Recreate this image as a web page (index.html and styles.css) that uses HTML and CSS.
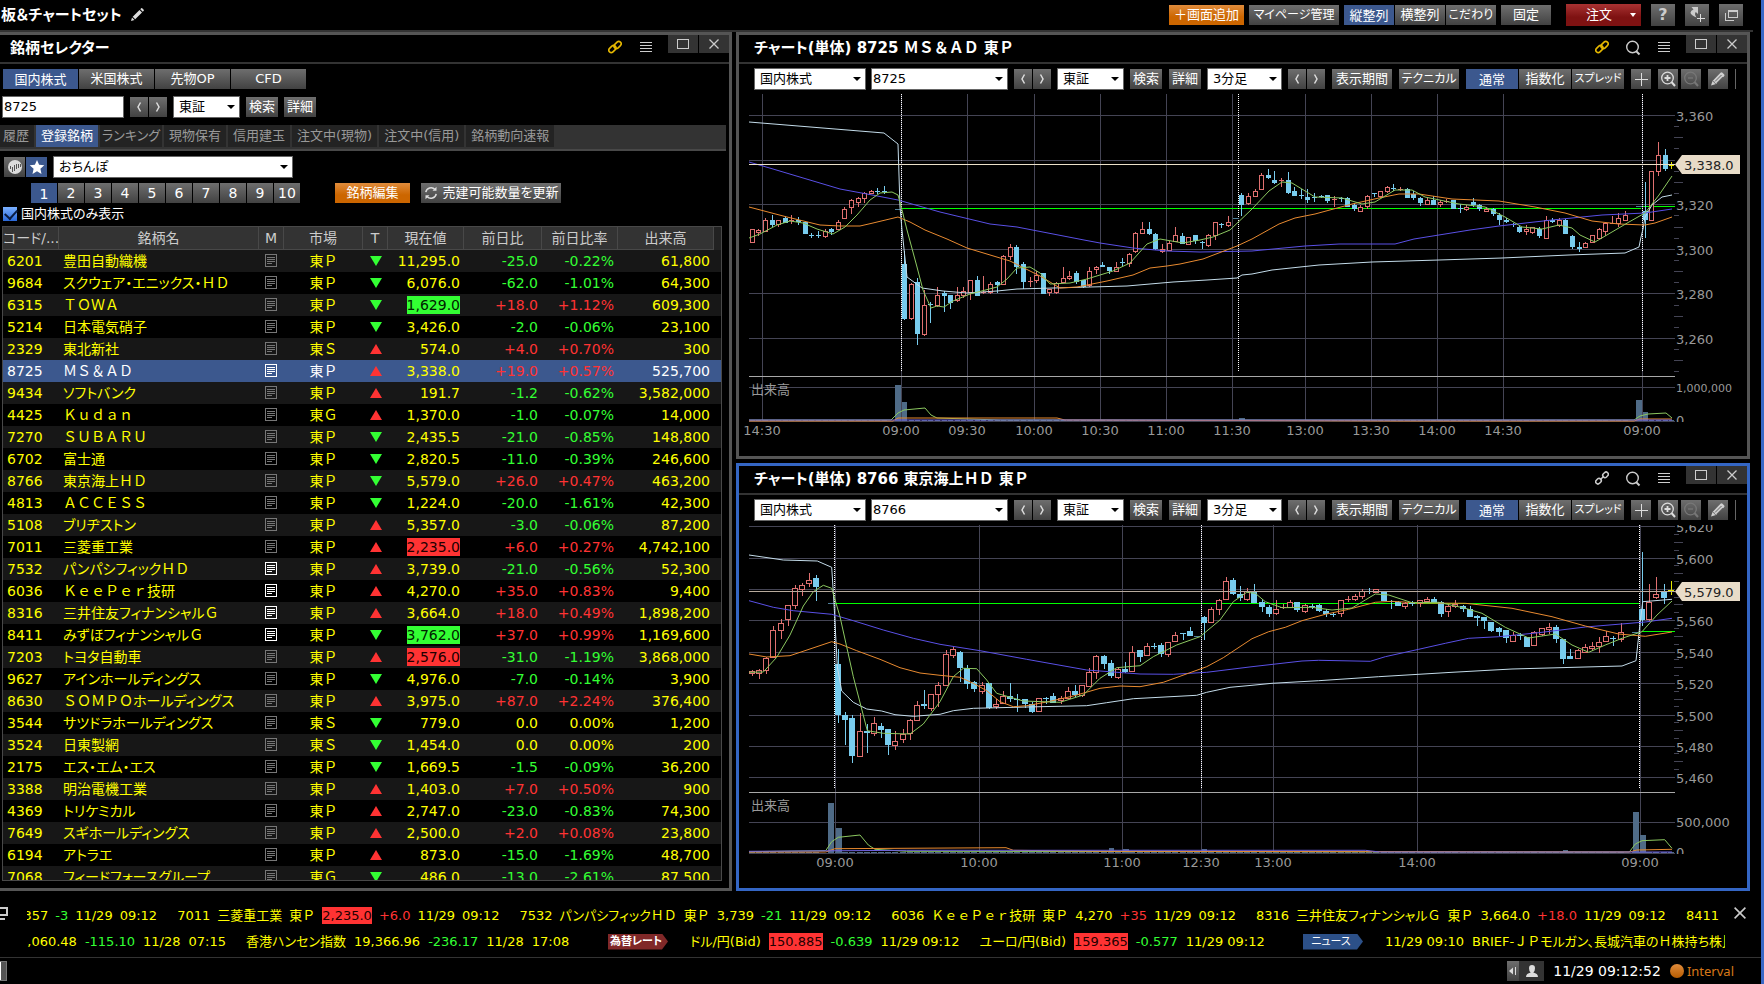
FILE: index.html
```html
<!DOCTYPE html>
<html lang="ja">
<head>
<meta charset="utf-8">
<title>板＆チャートセット</title>
<link rel="stylesheet" href="styles.css">
</head>
<body>
<svg class="defs" aria-hidden="true">
  <symbol id="i-pencil" viewBox="0 0 14 14"><path d="M1 13l1-3.500 2.500 2.500zM2.700 8.800L9.500 2l2.500 2.500-6.800 6.800zM10.300 1.200l.9-.9q.5-.4 1 0l1.500 1.500q.4.500 0 1l-.9.900z" fill="#ddd"/></symbol>
  <symbol id="i-link" viewBox="0 0 14 14"><g fill="none" stroke="currentColor" stroke-width="1.600"><rect x="5.600" y="2.600" width="8" height="4.800" rx="2.400" transform="rotate(-45 9.600 5)"/><rect x=".4" y="6.600" width="8" height="4.800" rx="2.400" transform="rotate(-45 4.400 9)"/></g></symbol>
  <symbol id="i-unlink" viewBox="0 0 14 14"><g fill="none" stroke="currentColor" stroke-width="1.500"><rect x="7.500" y="1.600" width="6" height="4.400" rx="2.200" transform="rotate(-45 10.500 3.800)"/><rect x=".5" y="8" width="6" height="4.400" rx="2.200" transform="rotate(-45 3.500 10.200)"/><path d="M5 9l4-4"/></g></symbol>
  <symbol id="i-search" viewBox="0 0 16 16"><circle cx="7.500" cy="7" r="5.800" fill="none" stroke="#ccc" stroke-width="1.400"/><path d="M11 11l3.500 3.500" stroke="#ccc" stroke-width="2"/></symbol>
  <symbol id="i-menu" viewBox="0 0 12 12"><path d="M0 1.500h12M0 4.500h12M0 7.500h12M0 10.500h12" stroke="#ccc" shape-rendering="crispEdges"/></symbol>
  <symbol id="i-max" viewBox="0 0 12 10"><rect x=".5" y=".5" width="11" height="9" fill="none" stroke="#ccc" shape-rendering="crispEdges"/></symbol>
  <symbol id="i-x" viewBox="0 0 10 10"><path d="M.5.5l9 9M9.500.5l-9 9" stroke="#ccc" stroke-width="1.300"/></symbol>
  <symbol id="i-prev" viewBox="0 0 8 10"><path d="M5.500.5L3 5l2.500 4.500" fill="none" stroke="#ddd" stroke-width="1.500"/></symbol>
  <symbol id="i-next" viewBox="0 0 8 10"><path d="M2.500.5L5 5 2.500 9.500" fill="none" stroke="#ddd" stroke-width="1.500"/></symbol>
  <symbol id="i-plus" viewBox="0 0 14 14"><path d="M7.500.5v14M.5 7.500h14" stroke="#ddd" shape-rendering="crispEdges"/></symbol>
  <symbol id="i-zin" viewBox="0 0 16 16"><circle cx="7.500" cy="7" r="5.800" fill="none" stroke="#ddd" stroke-width="1.300"/><path d="M11.500 11l3.500 4" stroke="#ddd" stroke-width="2"/><path d="M4.500 7h6M7.500 4v6" stroke="#ddd" stroke-width="1.800"/></symbol>
  <symbol id="i-zout" viewBox="0 0 16 16"><circle cx="7.500" cy="7" r="5.800" fill="none" stroke="#777" stroke-width="1.300"/><path d="M11.500 11l3.500 4" stroke="#777" stroke-width="2"/><path d="M5 7h5" stroke="#777" stroke-width="1.300"/></symbol>
  <symbol id="i-draw" viewBox="0 0 14 14"><path d="M0 13.500l1.500-4.500L9.500.8q1-1 2 0l1.500 1.500q1 1 0 2L5 12z" fill="#d0d0d0"/><path d="M4 9.500l6.500-6.500M5.800 11l6-6" stroke="#555" stroke-width=".9"/><path d="M1.800 9l3 3" stroke="#555" stroke-width=".8"/></symbol>
  <symbol id="i-doc" viewBox="0 0 13 14"><rect x=".5" y=".5" width="11" height="12" fill="none" stroke="currentColor"/><path d="M2 3.500h8M2 5.500h8M2 7.500h8M2 9.500h5" stroke="currentColor"/></symbol>
  <symbol id="i-wave" viewBox="0 0 16 16"><circle cx="8" cy="8" r="7" fill="#ddd"/><path d="M3.500 7v3M5.500 8v5M7.500 6v6M9.500 5v5M11.500 5v4M13.500 5v3" stroke="#555"/></symbol>
  <symbol id="i-star" viewBox="0 0 16 16"><path d="M8 1l2.100 4.800 5.200.500-3.900 3.500 1.100 5.100L8 12.300l-4.500 2.600 1.100-5.100L.7 6.300l5.200-.5z" fill="#fff"/></symbol>
  <symbol id="i-refresh" viewBox="0 0 14 14"><path d="M1.800 6.200A5.300 5.300 0 0 1 11 3.500M12.200 7.800A5.300 5.300 0 0 1 3 10.500" fill="none" stroke="#ddd" stroke-width="1.500"/><path d="M12.500.8v4H8.500zM1.500 13.200v-4h4z" fill="#ddd"/></symbol>
  <symbol id="i-shortcut" viewBox="0 0 16 16"><path d="M2.500 0H9v7L6.800 5Q5 7 7.500 10.500 1.500 8 1.500 5.500 1.800 3.500 4.500 2.600z" fill="#ccc"/><path d="M11.500 7v8M8 11.500h8" stroke="#ddd" shape-rendering="crispEdges"/></symbol>
  <symbol id="i-windows" viewBox="0 0 14 12"><path d="M4.500 8.500h9v-7h-9zM4.500 2h9" fill="none" stroke="#ccc" shape-rendering="crispEdges"/><path d="M1.500 4v7.500H10" fill="none" stroke="#ccc" shape-rendering="crispEdges"/></symbol>
  <symbol id="i-user" viewBox="0 0 14 14"><path d="M7 1q3 0 3 3.300Q10 7.500 8.300 8.600 12.800 9.600 13 13H1q.2-3.400 4.700-4.400Q4 7.500 4 4.300 4 1 7 1z" fill="#ddd"/></symbol>
</svg>

<header class="topbar">
  <h1 class="topbar-title">板＆チャートセット <svg width="14" height="14"><use href="#i-pencil"/></svg></h1>
  <nav class="topbar-actions">
    <button class="btn orange w75">＋画面追加</button>
    <button class="btn w90">マイページ管理</button>
    <div class="group"><button class="btn active w50">縦整列</button><button class="btn w50">横整列</button><button class="btn w50 kana">こだわり</button></div>
    <button class="btn w50">固定</button>
    <div class="topbar-tools">
      <button class="btn red">注文</button>
      <button class="btn tool help" aria-label="ヘルプ">?</button>
      <button class="btn tool" aria-label="ショートカット追加"><svg width="16" height="16"><use href="#i-shortcut"/></svg></button>
      <button class="btn tool" aria-label="ウィンドウ"><svg width="14" height="12"><use href="#i-windows"/></svg></button>
    </div>
  </nav>
</header>

<main class="workspace">
  <section class="panel selector">
    <header class="panel-head">
      <h2>銘柄セレクター</h2>
      <svg class="linked" width="14" height="14"><use href="#i-link"/></svg>
      <svg class="menu" width="12" height="12"><use href="#i-menu"/></svg>
      <div class="win"><button aria-label="最大化"><svg width="12" height="10"><use href="#i-max"/></svg></button><button aria-label="閉じる"><svg width="10" height="10"><use href="#i-x"/></svg></button></div>
    </header>
    <div class="row market-tabs">
      <button class="btn active w75">国内株式</button><button class="btn w75">米国株式</button><button class="btn w75">先物OP</button><button class="btn w75">CFD</button>
    </div>
    <div class="row search">
      <input class="code-input" type="text" value="8725" aria-label="銘柄コード">
      <div class="group"><button class="btn nav" aria-label="前へ"><svg width="8" height="10"><use href="#i-prev"/></svg></button><button class="btn nav" aria-label="次へ"><svg width="8" height="10"><use href="#i-next"/></svg></button></div>
      <label class="select w67"><select aria-label="市場"><option>東証</option></select></label>
      <button class="btn w32">検索</button>
      <button class="btn w32">詳細</button>
    </div>
    <nav class="list-tabs">
      <button>履歴</button><button class="on">登録銘柄</button><button class="kana">ランキング</button><button>現物保有</button><button>信用建玉</button><button>注文中(現物)</button><button>注文中(信用)</button><button>銘柄動向速報</button>
    </nav>
    <div class="row lists">
      <div class="group"><button class="btn small" aria-label="チャート表示"><svg width="16" height="16"><use href="#i-wave"/></svg></button><button class="btn small active" aria-label="お気に入り"><svg width="16" height="16"><use href="#i-star"/></svg></button></div>
      <label class="select w240"><select aria-label="リスト"><option>おちんぽ</option></select></label>
    </div>
    <div class="row pages">
      <div class="group"><button class="btn page active">1</button><button class="btn page">2</button><button class="btn page">3</button><button class="btn page">4</button><button class="btn page">5</button><button class="btn page">6</button><button class="btn page">7</button><button class="btn page">8</button><button class="btn page">9</button><button class="btn page">10</button></div>
      <button class="btn orange w75 edit">銘柄編集</button>
      <button class="btn update"><svg width="14" height="14"><use href="#i-refresh"/></svg>売建可能数量を更新</button>
    </div>
    <label class="only"><input type="checkbox" checked>国内株式のみ表示</label>
    <div class="table-wrap">
      <table>
        <colgroup><col class="c-code"><col class="c-name"><col class="c-s"><col class="c-mkt"><col class="c-s"><col class="c-price"><col class="c-chg"><col class="c-pct"><col class="c-vol"><col class="c-end"></colgroup>
        <thead><tr><th class="l">コード/...</th><th>銘柄名</th><th>M</th><th>市場</th><th>T</th><th>現在値</th><th>前日比</th><th>前日比率</th><th>出来高</th><th></th></tr></thead>
        <tbody id="quotes"></tbody>
      </table>
    </div>
  </section>

  <section class="panel chart-a">
    <header class="panel-head">
      <h2><span>チャート(単体) 8725 <span class="fw">ＭＳ＆ＡＤ</span> 東<span class="fw">Ｐ</span></span></h2>
      <svg class="linked" width="14" height="14"><use href="#i-link"/></svg>
      <svg class="find" width="16" height="16"><use href="#i-search"/></svg>
      <svg class="menu" width="12" height="12"><use href="#i-menu"/></svg>
      <div class="win"><button aria-label="最大化"><svg width="12" height="10"><use href="#i-max"/></svg></button><button aria-label="閉じる"><svg width="10" height="10"><use href="#i-x"/></svg></button></div>
    </header>
    <div class="toolbar">
      <label class="select w112"><select aria-label="商品"><option>国内株式</option></select></label>
      <label class="select w137 tight"><select aria-label="銘柄"><option>8725</option></select></label>
      <div class="group"><button class="btn nav" aria-label="前へ"><svg width="8" height="10"><use href="#i-prev"/></svg></button><button class="btn nav" aria-label="次へ"><svg width="8" height="10"><use href="#i-next"/></svg></button></div>
      <label class="select w67"><select aria-label="市場"><option>東証</option></select></label>
      <button class="btn w32">検索</button>
      <button class="btn w32">詳細</button>
      <label class="select w75"><select aria-label="足種"><option>3分足</option></select></label>
      <div class="group"><button class="btn nav" aria-label="前へ"><svg width="8" height="10"><use href="#i-prev"/></svg></button><button class="btn nav" aria-label="次へ"><svg width="8" height="10"><use href="#i-next"/></svg></button></div>
      <button class="btn w60">表示期間</button>
      <button class="btn w60 kana">テクニカル</button>
      <div class="group"><button class="btn active w52">通常</button><button class="btn w52">指数化</button><button class="btn w52 kana">スプレッド</button></div>
      <button class="btn sq" aria-label="十字線"><svg width="14" height="14"><use href="#i-plus"/></svg></button>
      <div class="group wide"><button class="btn sq" aria-label="拡大"><svg width="16" height="16"><use href="#i-zin"/></svg></button><button class="btn sq" aria-label="縮小"><svg width="16" height="16"><use href="#i-zout"/></svg></button></div>
      <button class="btn sq" aria-label="描画"><svg width="14" height="14"><use href="#i-draw"/></svg></button>
      <span class="divider"></span>
    </div>
    <svg class="plot" id="plot-a" viewBox="739 94 1008 362" preserveAspectRatio="xMinYMin meet"></svg>
  </section>

  <section class="panel chart-b focused">
    <header class="panel-head">
      <h2><span>チャート(単体) 8766 東京海上<span class="fw">ＨＤ</span> 東<span class="fw">Ｐ</span></span></h2>
      <svg class="unlinked" width="14" height="14"><use href="#i-unlink"/></svg>
      <svg class="find" width="16" height="16"><use href="#i-search"/></svg>
      <svg class="menu" width="12" height="12"><use href="#i-menu"/></svg>
      <div class="win"><button aria-label="最大化"><svg width="12" height="10"><use href="#i-max"/></svg></button><button aria-label="閉じる"><svg width="10" height="10"><use href="#i-x"/></svg></button></div>
    </header>
    <div class="toolbar">
      <label class="select w112"><select aria-label="商品"><option>国内株式</option></select></label>
      <label class="select w137 tight"><select aria-label="銘柄"><option>8766</option></select></label>
      <div class="group"><button class="btn nav" aria-label="前へ"><svg width="8" height="10"><use href="#i-prev"/></svg></button><button class="btn nav" aria-label="次へ"><svg width="8" height="10"><use href="#i-next"/></svg></button></div>
      <label class="select w67"><select aria-label="市場"><option>東証</option></select></label>
      <button class="btn w32">検索</button>
      <button class="btn w32">詳細</button>
      <label class="select w75"><select aria-label="足種"><option>3分足</option></select></label>
      <div class="group"><button class="btn nav" aria-label="前へ"><svg width="8" height="10"><use href="#i-prev"/></svg></button><button class="btn nav" aria-label="次へ"><svg width="8" height="10"><use href="#i-next"/></svg></button></div>
      <button class="btn w60">表示期間</button>
      <button class="btn w60 kana">テクニカル</button>
      <div class="group"><button class="btn active w52">通常</button><button class="btn w52">指数化</button><button class="btn w52 kana">スプレッド</button></div>
      <button class="btn sq" aria-label="十字線"><svg width="14" height="14"><use href="#i-plus"/></svg></button>
      <div class="group wide"><button class="btn sq" aria-label="拡大"><svg width="16" height="16"><use href="#i-zin"/></svg></button><button class="btn sq" aria-label="縮小"><svg width="16" height="16"><use href="#i-zout"/></svg></button></div>
      <button class="btn sq" aria-label="描画"><svg width="14" height="14"><use href="#i-draw"/></svg></button>
      <span class="divider"></span>
    </div>
    <svg class="plot" id="plot-b" viewBox="739 525 1008 363" preserveAspectRatio="xMinYMin meet"></svg>
  </section>
</main>

<section class="ticker">
  <svg class="ticker-icon" width="8" height="14" viewBox="0 0 8 14"><path d="M0 1h7v7H0M0 12h5" fill="none" stroke="#ccc" stroke-width="2"/></svg>
  <div class="ticker-rows">
    <div class="line stocks">
      <p class="cut"><span>5,357</span><span class="dn">-3</span><span>11/29</span><span>09:12</span></p>
      <p><span>7011</span><span>三菱重工業</span><span>東<span class="fw">Ｐ</span></span><mark class="r">2,235.0</mark><span class="up">+6.0</span><span>11/29</span><span>09:12</span></p>
      <p><span>7532</span><span>パンパシフィック<span class="fw">ＨＤ</span></span><span>東<span class="fw">Ｐ</span></span><span>3,739</span><span class="dn">-21</span><span>11/29</span><span>09:12</span></p>
      <p><span>6036</span><span><span class="fw">ＫｅｅＰｅｒ</span>技研</span><span>東<span class="fw">Ｐ</span></span><span>4,270</span><span class="up">+35</span><span>11/29</span><span>09:12</span></p>
      <p><span>8316</span><span>三井住友フィナンシャル<span class="fw">Ｇ</span></span><span>東<span class="fw">Ｐ</span></span><span>3,664.0</span><span class="up">+18.0</span><span>11/29</span><span>09:12</span></p>
      <p><span>8411</span></p>
    </div>
    <div class="line feeds">
      <div class="line seg">
        <p class="cut2"><span>6,060.48</span><span class="dn">-115.10</span><span>11/28</span><span>07:15</span></p>
        <p><span>香港ハンセン指数</span><span>19,366.96</span><span class="dn">-236.17</span><span>11/28</span><span>17:08</span></p>
      </div>
      <div class="line seg">
        <b class="badge fx">為替レート</b>
        <p><span>ドル/円(Bid)</span><mark class="r">150.885</mark><span class="dn">-0.639</span><span>11/29 09:12</span></p>
        <p><span>ユーロ/円(Bid)</span><mark class="r">159.365</mark><span class="dn">-0.577</span><span>11/29 09:12</span></p>
      </div>
      <div class="line seg">
        <b class="badge news">ニュース</b>
        <p><span>11/29 09:10</span><span>BRIEF-<span class="fw">ＪＰ</span>モルガン、長城汽車の<span class="fw">Ｈ</span>株持ち株比</span></p>
      </div>
    </div>
  </div>
  <button class="ticker-close" aria-label="閉じる"><svg width="12" height="12"><use href="#i-x"/></svg></button>
</section>

<footer class="status">
  <button class="status-left" aria-label="メニュー"></button>
  <div class="status-right">
    <div class="group0"><button class="btn fold" aria-label="折りたたむ"><svg width="8" height="8" viewBox="0 0 8 8"><path d="M0 4l4-3.500v7z" fill="#ddd"/><path d="M6.500 0v8" stroke="#ddd"/></svg></button><button class="user" aria-label="ユーザー"><svg width="14" height="14"><use href="#i-user"/></svg></button></div>
    <time>11/29 09:12:52</time>
    <span class="interval"><i></i>Interval</span>
  </div>
</footer>
<script src="app.js"></script>
</body>
</html>
```

FILE: styles.css
```css
* { box-sizing: border-box; }
html, body { height: 100%; }
body {
  margin: 0;
  display: flex;
  flex-direction: column;
  overflow: hidden;
  background: #000;
  border-right: 3px solid #3a68c6;
  color: #fff;
  font: 13px/20px "DejaVu Sans", "Noto Sans CJK JP", sans-serif;
  font-feature-settings: "palt";
}
h1, h2, p { margin: 0; }
button, input, select { font: inherit; font-feature-settings: inherit; }
svg { display: block; flex: none; }
.defs { position: absolute; width: 0; height: 0; }
.fw { font-feature-settings: normal; }

.btn {
  height: 20px;
  padding: 0;
  border: 0;
  background: linear-gradient(#6e6e6e, #424242);
  color: #fff;
  line-height: 20px;
  white-space: nowrap;
  display: flex;
  align-items: center;
  justify-content: center;
  flex: none;
  overflow: hidden;
}
.btn.active { background: #3c588e; padding-top: 2px; }
.btn.small.active { padding-top: 0; }
.btn.orange { background: linear-gradient(#e08c3c, #cc6600 60%); }
.group { display: flex; gap: 1px; flex: none; }
.group.wide { gap: 3px; }
.group0 { display: flex; }
.w32 { width: 32px; } .w50 { width: 50px; } .w52 { width: 52px; } .w60 { width: 60px; }
.w67 { width: 67px; } .w75 { width: 75px; } .w90 { width: 90px; } .w112 { width: 112px; }
.w137 { width: 137px; } .w240 { width: 240px; }
.btn.kana, .w90 { font-size: 12px; }
.btn.w52.kana { font-size: 11px; }
.nav { width: 18px; }
.sq { width: 20px; }
.small { width: 21px; }
.page { width: 26px; font-size: 14px; }

.topbar {
  height: 32px;
  flex: none;
  margin-right: 8px;
  padding-right: 10px;
  border-bottom: 2px solid #333;
  display: flex;
  justify-content: space-between;
}
.topbar-title {
  display: flex;
  align-items: center;
  gap: 8px;
  font-size: 15px;
  line-height: 32px;
  padding-left: 1px;
  white-space: nowrap;
}
.topbar-actions { display: flex; align-items: center; gap: 5px; }
.topbar-tools { display: flex; gap: 10px; margin-left: 10px; }
.topbar-tools .btn { height: 22px; }
.btn.red { width: 75px; gap: 18px; padding-left: 20px; background: linear-gradient(#a83232, #7e1212 60%); justify-content: flex-start; }
.btn.red::after { content: ""; border: 3px solid transparent; border-top: 4px solid #fff; border-bottom: 0; }
.tool { width: 24px; }
.help { font-size: 16px; font-weight: bold; color: #ccc; }

.workspace {
  flex: 1;
  min-height: 0;
  margin-right: 11px;
  display: grid;
  grid-template-columns: minmax(0, 732fr) minmax(0, 1014fr);
  grid-template-rows: minmax(0, 427fr) minmax(0, 428fr);
  gap: 4px;
}
.panel { border: 3px solid #555; display: flex; flex-direction: column; min-width: 0; min-height: 0; overflow: hidden; }
.panel.selector { grid-row: 1 / 3; border-left: 0; }
.panel.focused { border-color: #3466c4; }
.panel-head {
  height: 29px;
  flex: none;
  border-bottom: 2px solid #333;
  display: flex;
  align-items: flex-start;
}
.panel-head h2 {
  flex: 1;
  min-width: 0;
  display: flex;
  align-items: center;
  gap: 3px;
  padding-left: 7px;
  font-size: 15px;
  line-height: 27px;
  white-space: nowrap;
}
.panel-head h2::before {
  content: "";
  width: 5px;
  height: 20px;
  background: radial-gradient(circle, #999 35%, transparent 40%) 0 0 / 2px 2px;
}
.selector .panel-head h2 { padding-left: 2px; }
.panel-head > svg { margin-top: 5px; }
.panel-head .linked { color: #e6b800; margin-right: 16px; }
.panel-head .unlinked { color: #ccc; margin-right: 16px; }
.selector .panel-head .linked { margin-right: 18px; }
.panel-head .find { margin-right: 17px; }
.panel-head .menu { margin: 6px 16px 0 0; }
.win { display: flex; gap: 1px; }
.win button { width: 30px; height: 18px; border: 0; padding: 0; background: #333; display: grid; place-items: center; }

.row { display: flex; flex: none; padding: 0 3px; }
.market-tabs { gap: 1px; padding-top: 5px; }
.search { gap: 6px; padding: 7px 2px 0; align-items: center; }
.code-input { width: 122px; height: 22px; border: 1px solid #666; padding: 0 0 2px 1px; background: #fff; color: #000; outline: 0; }
.select { position: relative; height: 22px; flex: none; display: block; }
.select select {
  appearance: none;
  width: 100%;
  height: 22px;
  border: 1px solid #666;
  border-radius: 0;
  background: #fff;
  color: #000;
  padding: 0 0 0 5px;
  line-height: 20px;
  display: block;
}
.select.tight select { padding: 0 0 2px 1px; }
.select::after {
  content: "";
  position: absolute;
  right: 5px;
  top: 9px;
  border: 4px solid transparent;
  border-top-color: #000;
  border-bottom: 0;
}
.list-tabs {
  flex: none;
  display: flex;
  gap: 2px;
  margin: 7px 3px 0 0;
  height: 26px;
  background: #333;
  border-bottom: 2px solid #484848;
}
.list-tabs button { border: 0; padding: 0 5px; height: 22px; background: #232323; color: #999; white-space: nowrap; }
.list-tabs button.kana { padding: 0 2px; }
.list-tabs button:first-child { padding: 0 5px 0 3px; }
.list-tabs .on { background: #3c588e; color: #fff; }
.lists { padding: 5px 4px 0; gap: 6px; align-items: center; }
.pages { padding: 5px 3px 0 31px; }
.edit { margin-left: 35px; }
.update { margin-left: 11px; width: 140px; gap: 5px; }
.only { display: flex; align-items: center; gap: 4px; padding-left: 3px; height: 22px; flex: none; }
.only input {
  appearance: none;
  width: 14px;
  height: 14px;
  margin: 0;
  background: linear-gradient(#7ab0ff, #2a68d8);
}
.only input::after {
  content: "";
  display: block;
  width: 10px;
  height: 6px;
  margin: 2px;
  border: solid #0a1c40;
  border-width: 0 0 2px 2px;
  transform: rotate(-48deg);
}

.table-wrap {
  flex: 1;
  min-height: 0;
  margin: 1px 7px 7px 2px;
  border: 1px solid #484848;
  overflow: hidden;
  font-size: 14px;
}
table { width: 100%; table-layout: fixed; border-collapse: separate; border-spacing: 0; }
.c-code { width: 56px; } .c-name { width: 200px; } .c-s { width: 25px; } .c-mkt { width: 79px; }
.c-price { width: 76px; } .c-chg { width: 78px; } .c-pct { width: 76px; } .c-vol { width: 96px; } .c-end { width: 8px; }
th {
  height: 23px;
  padding: 0;
  background: #333;
  border-right: 1px solid #484848;
  border-bottom: 1px solid #484848;
  color: #ccc;
  font-weight: normal;
  line-height: 22px;
  white-space: nowrap;
  overflow: hidden;
}
th.l { text-align: left; }
th:last-child { border: 0; background: #222; }
td {
  height: 22px;
  padding: 0 4px;
  line-height: 22px;
  color: #ff0;
  text-align: right;
  white-space: nowrap;
}
td:nth-child(-n+2) { text-align: left; }
td:nth-child(3), td:nth-child(5) { padding: 0; }
td:nth-child(4) { text-align: center; }
tbody tr:nth-child(odd) td { background: #171717; }
tbody tr.sel td { background: #3c588e; }
tbody tr.sel td.w { color: #fff; }
td svg { margin: 0 auto; color: #777; }
td svg.new { color: #fff; }
td .px { display: inline-block; line-height: 18px; }
.dn, td.dn { color: #3f3; }
.up, td.up { color: #f33; }
.px.r, mark.r { background: #f33; color: #200; }
.px.g { background: #3f3; color: #020; }
.tri { display: block; width: 12px; margin: 0 auto; border: 6px solid transparent; }
.tri.d { border-top: 10px solid #3f3; border-bottom: 0; }
.tri.u { border-bottom: 10px solid #f33; border-top: 0; }

.toolbar { height: 30px; flex: none; display: flex; align-items: center; gap: 6px; padding: 0 0 0 15px; }
.toolbar .w137 { margin-left: -1px; }
.toolbar .w32 + .w32, .toolbar .w60, .toolbar .w60 + .group, .toolbar .sq, .toolbar .group.wide, .divider { margin-left: 1px; }
.toolbar .group .sq { margin-left: 0; }
.divider { width: 1px; height: 20px; background: #666; }
.plot { flex: 1; min-height: 0; width: 100%; }
.plot text { font-size: 13px; fill: #999; }
.plot .mid { text-anchor: middle; }
.plot .tag { fill: #222; }
.plot .long { font-size: 11px; }
.crisp { shape-rendering: crispEdges; }

.ticker { flex: none; height: 67px; display: flex; padding-top: 11px; border-bottom: 1px solid #333; color: #ff0; }
.ticker-icon { margin: 5px 19px 0 0; }
.ticker-rows { flex: 1; min-width: 0; overflow: hidden; }
.line { display: flex; align-items: center; white-space: nowrap; }
.stocks { height: 27px; gap: 20px; }
.stocks p { display: flex; gap: 7px; flex: none; }
.feeds { height: 25px; display: grid; grid-template-columns: 581fr 695fr 422fr; gap: 0; }
.feeds p { display: flex; gap: 8px; flex: none; }
.seg { gap: 20px; overflow: hidden; }
.cut { margin-left: -16px; }
.cut2 { margin-left: -8px; }
mark { line-height: 17px; height: 17px; margin-top: 1px; }
.badge {
  flex: none;
  width: 60px;
  height: 16px;
  padding-right: 4px;
  margin-right: 2px;
  color: #fff;
  font-size: 11px;
  line-height: 16px;
  text-align: center;
  clip-path: polygon(0 0, 54px 0, 100% 50%, 54px 100%, 0 100%);
}
.fx { background: #802828; }
.news { background: #2c5088; font-weight: normal; }
.ticker-close { width: 36px; height: 22px; border: 0; padding: 0 0 0 9px; background: none; }

.status { flex: none; height: 26px; display: flex; justify-content: space-between; align-items: center; padding-right: 27px; }
.status-left { width: 7px; height: 20px; padding: 0; border: 1px solid #777; border-left: 0; background: linear-gradient(90deg, #fff 1px, #555 1px); }
.status-right { display: flex; align-items: center; gap: 9px; }
.fold { width: 12px; }
.user { width: 25px; height: 20px; border: 0; padding: 0; background: #333; display: grid; place-items: center; }
time { font-size: 14px; line-height: 24px; }
.interval { display: flex; align-items: center; gap: 3px; color: #d87818; font-family: "Noto Sans", sans-serif; }
.interval i { width: 14px; height: 14px; border-radius: 50%; background: linear-gradient(#e08c3c, #b85c00); }
```

FILE: app.js
```js
// code|name|market|tick|price|change|percent|volume|flags (r/g = flash colour, n = new memo, s = selected)
const quotes = `6201|豊田自動織機|東Ｐ|d|11,295.0|-25.0|-0.22%|61,800|
9684|スクウェア・エニックス・ＨＤ|東Ｐ|d|6,076.0|-62.0|-1.01%|64,300|
6315|ＴＯＷＡ|東Ｐ|d|1,629.0|+18.0|+1.12%|609,300|g
5214|日本電気硝子|東Ｐ|d|3,426.0|-2.0|-0.06%|23,100|
2329|東北新社|東Ｓ|u|574.0|+4.0|+0.70%|300|
8725|ＭＳ＆ＡＤ|東Ｐ|u|3,338.0|+19.0|+0.57%|525,700|sn
9434|ソフトバンク|東Ｐ|u|191.7|-1.2|-0.62%|3,582,000|
4425|Ｋｕｄａｎ|東Ｇ|u|1,370.0|-1.0|-0.07%|14,000|
7270|ＳＵＢＡＲＵ|東Ｐ|d|2,435.5|-21.0|-0.85%|148,800|
6702|富士通|東Ｐ|d|2,820.5|-11.0|-0.39%|246,600|
8766|東京海上ＨＤ|東Ｐ|d|5,579.0|+26.0|+0.47%|463,200|
4813|ＡＣＣＥＳＳ|東Ｐ|d|1,224.0|-20.0|-1.61%|42,300|
5108|ブリヂストン|東Ｐ|u|5,357.0|-3.0|-0.06%|87,200|
7011|三菱重工業|東Ｐ|u|2,235.0|+6.0|+0.27%|4,742,100|r
7532|パンパシフィックＨＤ|東Ｐ|u|3,739.0|-21.0|-0.56%|52,300|n
6036|ＫｅｅＰｅｒ技研|東Ｐ|u|4,270.0|+35.0|+0.83%|9,400|n
8316|三井住友フィナンシャルＧ|東Ｐ|u|3,664.0|+18.0|+0.49%|1,898,200|n
8411|みずほフィナンシャルＧ|東Ｐ|d|3,762.0|+37.0|+0.99%|1,169,600|ng
7203|トヨタ自動車|東Ｐ|u|2,576.0|-31.0|-1.19%|3,868,000|r
9627|アインホールディングス|東Ｐ|d|4,976.0|-7.0|-0.14%|3,900|
8630|ＳＯＭＰＯホールディングス|東Ｐ|u|3,975.0|+87.0|+2.24%|376,400|
3544|サツドラホールディングス|東Ｓ|d|779.0|0.0|0.00%|1,200|
3524|日東製網|東Ｓ|d|1,454.0|0.0|0.00%|200|
2175|エス・エム・エス|東Ｐ|d|1,669.5|-1.5|-0.09%|36,200|
3388|明治電機工業|東Ｐ|u|1,403.0|+7.0|+0.50%|900|
4369|トリケミカル|東Ｐ|u|2,747.0|-23.0|-0.83%|74,300|
7649|スギホールディングス|東Ｐ|u|2,500.0|+2.0|+0.08%|23,800|
6194|アトラエ|東Ｐ|u|873.0|-15.0|-1.69%|48,700|
7068|フィードフォースグループ|東Ｇ|d|486.0|-13.0|-2.61%|87,500|`;

const signClass = v => v[0] === '-' ? 'dn' : v[0] === '+' ? 'up' : '';
// Full-width Latin keeps its full advance next to proportional kana.
const wide = s => s.replace(/[Ａ-Ｚａ-ｚ＆]+/g, m => `<span class="fw">${m}</span>`);
document.getElementById('quotes').innerHTML = quotes.split('\n').map(line => {
  const [code, name, mkt, tick, price, chg, pct, vol, f] = line.split('|');
  const flash = f.includes('r') ? 'r' : f.includes('g') ? 'g' : '';
  return `<tr class="${f.includes('s') ? 'sel' : ''}"><td class="w">${code}</td><td class="w">${wide(name)}</td>` +
    `<td><svg class="${f.includes('n') ? 'new' : ''}" width="13" height="14"><use href="#i-doc"/></svg></td>` +
    `<td class="w">${wide(mkt)}</td><td><span class="tri ${tick}"></span></td>` +
    `<td><span class="px ${flash}">${price}</span></td><td class="${signClass(chg)}">${chg}</td>` +
    `<td class="${signClass(pct)}">${pct}</td><td class="w">${vol}</td><td></td></tr>`;
}).join('');

// Candles: index type high top bottom low. Types: u rise, d fall, y latest, m marker.
const chartA = {
  x: v => v, y: v => v, first: 752.3, step: 6.615, body: 5, top: 94, dotEnd: 371, sep: 376, base: 421, labelY: 435,
  grid: [[762, '14:30'], [901, '09:00'], [967, '09:30'], [1034, '10:00'], [1100, '10:30'], [1166, '11:00'], [1232, '11:30'], [1305, '13:00'], [1371, '13:30'], [1437, '14:00'], [1503, '14:30'], [1642, '09:00']],
  levels: [[115, '3,360'], [160, ''], [204, '3,320'], [249, '3,300'], [293, '3,280'], [338, '3,260']],
  ticks: 376, volGrid: [387, '1,000,000'], volLabelY: 394, sessions: [901, 1238, 1642],
  price: [164, '3,338.0'], priceColor: '#eadfc8', closes: [[902, 1641, 208], [1642, 1675, 206]],
  candles: `0u 229 229 242 242,1u 229 230 232 236,2u 218 220 231 231,3d 215 220 225 227,4u 220 220 224 227,5d 216 218 223 223,6u 215 220 221 224,7d 217 220 222 225,8d 222 222 234 234,9d 233 235 236 238,10d 231 235 236 238,11u 229 231 236 238,12d 228 229 232 235,13u 220 222 229 230,14u 207 209 218 219,15u 199 200 207 214,16u 197 198 202 207,17u 192 193 198 203,18u 190 191 193 194,19d 188 191 192 194,20d 186 191 192 194,22m 209 209 210 209,23d 251 264 319 320,24u 283 284 318 320,25d 278 282 334 345,26u 290 305 334 336,27d 302 304 305 323,28u 287 295 305 307,29d 291 293 296 312,30d 295 295 303 309,31u 287 295 300 302,32u 287 291 295 298,33u 280 280 292 300,34d 276 280 296 296,35u 276 292 293 294,36u 282 284 292 294,37d 281 282 285 293,38u 255 256 284 285,39u 244 247 256 260,40d 245 247 267 274,41d 262 264 282 289,42u 277 281 282 287,43u 271 275 280 283,44d 273 273 294 294,45u 289 289 292 296,46u 282 283 292 294,47u 267 278 282 283,48u 271 276 278 280,49d 271 273 282 284,50d 280 280 287 288,51u 267 271 285 287,52u 266 267 269 274,53d 262 265 267 267,54d 267 267 271 274,55u 262 267 271 271,56d 258 262 263 266,57u 253 254 263 267,58u 232 233 251 253,59u 222 229 233 234,60d 222 229 234 235,61d 233 234 249 250,62u 244 249 251 253,63u 241 243 250 251,64u 227 235 241 242,65d 233 236 244 244,66u 237 237 244 245,67d 235 235 241 244,68d 241 242 243 249,69u 234 235 245 247,70u 222 222 235 240,71d 223 224 225 228,72u 216 222 225 227,73m 218 218 219 218,74d 193 195 205 216,75u 193 196 203 205,76u 189 191 196 197,77u 173 175 189 189,78d 169 175 178 179,79d 171 180 183 184,80u 178 180 181 187,81d 172 180 193 194,82d 187 191 196 196,83d 189 195 196 199,84d 189 197 200 203,85d 193 197 198 202,86d 195 196 197 198,87d 195 195 201 203,88u 196 199 200 207,89d 197 198 199 202,90d 197 198 207 207,91d 203 205 209 211,92u 205 207 211 211,93u 195 196 206 209,94d 193 193 194 197,95u 191 191 196 198,96u 186 187 191 193,97d 184 188 189 191,98u 187 189 190 191,99d 188 189 198 198,100d 191 194 198 200,101d 197 198 203 206,102u 197 200 204 205,103d 196 200 205 205,104u 200 202 204 207,105u 199 201 202 203,106d 200 200 209 209,107d 204 208 209 213,108u 205 207 209 211,109d 198 202 205 207,110d 204 205 209 211,111u 207 209 211 212,112d 208 209 214 216,113d 213 215 220 225,114d 218 220 222 223,115d 223 224 225 227,116d 226 227 232 233,117u 225 229 231 235,118u 227 227 232 234,119d 227 229 236 238,120u 216 220 238 238,121d 218 220 222 223,122u 218 220 225 227,123d 219 220 234 234,124d 235 236 247 249,125d 242 247 249 252,126u 242 243 247 247,127u 235 235 242 242,128u 228 229 238 239,129u 222 223 231 236,130u 216 223 224 224,131u 213 218 223 227,132u 211 215 220 221,134m 206 206 207 206,135d 182 211 220 238,136u 171 171 220 221,137u 142 155 171 176,138d 149 155 169 171,139y 162 165 166 169`,
  lines: [
    ['#c4dcea', '749,122 884,133 898,144 900,207 902,230 907,277 922,288 943,291 967,293 997,291 1017,289 1090,287 1127,286 1150,284 1173,282 1207,280 1237,278 1242,275 1252,274 1272,270 1319,265 1372,262 1439,260 1502,258 1569,255 1625,253 1639,247 1641,237 1643,229 1645,217 1652,205 1662,197 1672,195'],
    ['#5a50e6', '749,162 773,169 840,189 867,194 898,200 940,212 990,224 1017,227 1084,240 1100,243 1133,248 1167,251 1200,252 1252,251 1305,246 1339,244 1395,244 1414,239 1470,230 1499,226 1552,220 1602,215 1645,213 1672,209'],
    ['#e88a30', '749,207 787,217 820,225 840,226 860,226 873,223 898,217 910,222 925,230 947,239 967,248 1010,261 1040,276 1060,288 1077,287 1107,281 1133,275 1150,268 1167,266 1180,264 1203,259 1237,246 1252,239 1279,224 1295,218 1315,214 1352,204 1379,198 1399,194 1419,194 1452,199 1499,201 1535,207 1565,213 1592,221 1619,224 1645,225 1655,223 1672,217'],
    ['#8cc860', '749,238 760,234 777,225 790,221 803,223 817,229 833,234 845,227 857,215 870,200 880,193 892,192 898,195 902,210 907,230 917,267 923,290 931,308 937,306 944,307 953,301 970,294 997,287 1007,279 1017,268 1030,267 1040,273 1050,284 1070,283 1087,279 1113,271 1130,263 1147,244 1160,239 1183,243 1200,240 1213,237 1230,230 1252,209 1269,191 1282,182 1292,183 1315,197 1342,198 1362,204 1375,202 1395,190 1412,190 1425,197 1459,204 1485,207 1505,217 1522,227 1542,229 1559,225 1572,228 1580,235 1595,242 1612,232 1629,222 1645,213 1659,195 1672,176'],
    ['#8cc860', '749,420 891,420 898,413 904,410 925,408 931,415 937,418 1000,420 1634,420 1640,416 1648,414 1666,413 1672,418'],
    ['#e88a30', '749,421 893,421 898,418 1057,418 1065,420 1400,421 1634,421 1640,419 1672,419'],
    ['#7060e0', '749,420 1390,420 1672,420']],
  volumes: [[895, 6, 385], [902, 5, 402], [1239, 6, 418], [1636, 6, 400], [1643, 5, 412]]
};
const chartB = {
  x: v => 740 + v / 3, y: v => 520 + v / 3, first: 752.3, step: 7.18, body: 6, top: 525, dotEnd: 788, sep: 792, base: 853, labelY: 867,
  grid: [[835, '09:00'], [979, '10:00'], [1122, '11:00'], [1201, '12:30'], [1273, '13:00'], [1417, '14:00'], [1640, '09:00']],
  levels: [[526, '5,620'], [558, '5,600'], [589, ''], [620, '5,560'], [652, '5,540'], [683, '5,520'], [715, '5,500'], [746, '5,480'], [777, '5,460']],
  ticks: 778, volGrid: [822, '500,000'], volLabelY: 810, sessions: [834, 1201, 1639],
  price: [591, '5,579.0'], priceColor: '#b8aa9c', closes: [[835, 1640, 603], [1642, 1675, 631]],
  candles: `0u 450 454 458 468,1u 448 450 460 478,2u 412 413 449 462,3u 318 331 410 412,4u 298 308 331 358,5u 255 256 298 318,6u 196 203 256 266,7u 190 196 206 228,8u 160 181 190 200,9d 166 174 201 242,11m 250 250 253 250,12d 386 433 586 610,13d 576 585 601 675,14d 586 594 709 728,15u 580 632 709 712,16d 612 632 638 698,17u 590 608 640 648,18d 608 618 629 654,19d 627 627 676 705,20u 632 664 674 690,21u 628 642 656 670,22u 596 600 638 660,23u 542 556 601 602,24d 510 551 558 568,25u 522 523 564 572,26u 487 496 523 560,27u 390 402 496 497,28u 378 388 406 415,29d 392 396 444 486,30d 436 444 492 506,31d 482 486 507 515,32u 487 496 512 522,33d 490 490 563 567,34u 538 552 557 567,35u 514 529 548 552,36d 490 528 536 545,37d 523 537 541 577,38d 537 538 553 563,39d 545 551 577 578,40u 533 535 572 577,41d 531 534 536 552,42d 520 529 549 550,43u 528 534 541 553,44u 500 514 534 535,45d 495 514 525 530,46u 495 496 526 532,47u 445 457 497 498,48u 406 409 457 478,49d 405 409 432 448,50d 420 430 468 473,51u 440 446 472 478,52d 425 448 456 458,53u 378 396 454 455,54d 390 391 411 426,55u 368 378 406 408,56d 368 378 381 388,57d 368 376 403 412,58u 366 367 402 411,59u 335 345 364 366,60d 338 339 342 360,61d 321 334 347 348,62m 349 349 352 349,63d 288 291 308 360,64u 260 268 307 308,65u 236 241 268 284,66u 170 184 237 238,67d 174 180 223 224,68d 198 221 234 243,69u 205 212 237 242,70d 193 213 249 250,71d 238 247 262 275,72d 255 261 281 290,73u 240 268 280 286,74u 253 262 265 268,75u 240 246 262 263,76d 246 246 271 275,77u 252 256 274 280,78d 253 257 260 266,79d 252 255 272 275,80d 266 273 282 290,81d 275 281 284 292,82u 240 241 280 292,83u 228 237 241 247,84u 222 228 236 243,85u 208 213 228 238,86d 203 213 217 222,87u 207 208 217 218,88d 213 213 243 244,89d 240 242 247 266,90d 242 246 258 259,91u 245 250 257 266,92d 244 249 252 257,93u 240 241 250 260,94u 231 237 242 244,95d 232 236 249 250,96d 244 246 281 290,97u 254 259 274 292,98u 241 252 259 263,99d 254 259 268 275,100d 259 267 290 291,101d 286 288 293 318,102d 290 292 303 327,103d 305 307 333 336,104d 322 325 336 347,105d 329 330 355 369,106u 335 345 364 366,107d 340 346 349 360,108d 350 351 381 382,109u 334 336 374 376,110u 323 325 341 348,111u 310 321 326 341,112d 314 320 358 368,113d 356 357 417 431,114d 386 409 416 417,115u 388 391 415 417,116u 372 382 396 397,117u 366 378 383 393,118u 350 367 379 398,119u 334 349 364 366,120d 348 353 358 378,121u 310 336 357 365,123m 335 335 338 335,124d 95 267 300 318,125u 193 246 298 302,126u 170 222 232 238,127d 193 212 234 252,128y 184 210 213 224`,
  lines: [
    ['#c4dcea', '27,105 130,120 232,123 275,142 282,250 292,440 305,513 340,547 380,567 425,573 465,584 520,589 600,583 640,572 700,565 900,560 1040,557 1100,548 1180,536 1370,526 1400,517 1470,502 1536,496 1596,490 1736,482 1916,470 2136,457 2316,447 2646,438 2688,422 2698,330 2708,245 2796,238'],
    ['#5a50e6', '27,242 100,262 160,272 275,283 340,302 430,330 520,355 600,373 720,392 860,418 1040,450 1200,462 1300,463 1400,457 1536,440 1686,423 1736,421 1891,424 1936,410 2036,388 2116,370 2186,355 2276,350 2396,338 2536,321 2716,306 2796,295'],
    ['#e88a30', '27,402 80,411 150,407 275,365 300,372 350,392 420,418 480,443 540,459 600,466 660,472 700,490 740,512 780,545 820,560 860,557 920,546 1000,528 1080,505 1140,498 1200,500 1270,487 1400,440 1450,413 1536,356 1586,335 1636,322 1686,302 1756,283 1826,268 1906,247 1956,244 2036,249 2176,250 2316,265 2436,290 2536,318 2636,342 2716,349 2796,336'],
    ['#8cc860', '27,457 70,456 110,412 150,345 190,258 220,215 250,196 275,205 300,290 340,470 382,632 430,640 510,642 550,612 600,545 640,470 670,445 710,446 740,480 770,520 850,543 960,547 1030,525 1080,475 1130,443 1200,437 1240,410 1310,375 1380,350 1440,300 1480,245 1520,217 1546,220 1576,245 1626,263 1716,262 1776,270 1836,264 1876,240 1906,222 1946,225 2016,248 2096,247 2176,265 2226,280 2296,322 2366,354 2446,342 2496,375 2546,397 2596,375 2646,355 2706,335 2751,285 2796,243'],
    ['#8cc860', '27,995 257,992 275,965 295,952 360,945 385,975 405,988 500,994 2668,996 2686,972 2706,962 2774,959 2796,985'],
    ['#e88a30', '27,996 257,996 285,986 798,983 820,991 1100,994 2670,996 2690,990 2796,988'],
    ['#7060e0', '27,994 500,991 1876,991 1920,996 2796,996']],
  volumes: [[828, 6, 803], [836, 6, 828], [1109, 5, 848], [1123, 6, 849], [1202, 5, 849], [1563, 5, 850], [1633, 6, 812], [1640, 6, 835]]
};

function draw(id, c) {
  const out = [];
  const hline = (x1, x2, y, color) => out.push(`<path class="crisp" d="M${x1} ${y + .5}H${x2}" stroke="${color}"/>`);
  const vline = (x, y1, y2, color, extra = '') => out.push(`<path class="crisp" d="M${x + .5} ${y1}V${y2}" stroke="${color}" ${extra}/>`);
  c.grid.forEach(([x]) => vline(x, c.top, c.base, '#444454'));
  c.levels.forEach(([y]) => hline(749, 1675, y, '#444454'));
  const first = c.levels[0][0], last = c.levels[c.levels.length - 1][0];
  const unit = (last - first) / (c.levels.length - 1) / 4;
  for (let k = 1; first + k * unit < c.ticks; k++) {
    if (k % 4) hline(1674, k % 2 ? 1679 : 1683, Math.round(first + k * unit), '#444454');
  }
  hline(749, 1675, c.volGrid[0], '#444454');
  hline(749, 1675, c.base, '#444454');
  hline(749, 1675, c.sep, '#a8a8a8');
  c.closes.forEach(([a, b, y]) => hline(a, b, y, '#0f0'));
  c.sessions.forEach(x => vline(x, c.top, c.dotEnd, '#fff', 'stroke-dasharray="1 1"'));
  c.levels.forEach(([y, t]) => t && out.push(`<text x="1676" y="${y + 6}">${t}</text>`));
  const [vy, vt] = c.volGrid;
  out.push(`<text class="${vt.length > 7 ? 'long' : ''}" x="1676" y="${vy + 5}">${vt}</text>`);
  c.grid.forEach(([x, t]) => out.push(`<text class="mid" x="${x}" y="${c.labelY}">${t}</text>`));
  c.volumes.forEach(([x, w, y]) => out.push(`<rect x="${x}" y="${y}" width="${w}" height="${c.base - y}" fill="#4f6b87"/>`));
  c.candles.split(',').forEach(s => {
    const [, i, type, rest] = s.match(/^(\d+)(\w) (.*)$/);
    const [hi, top, bot, lo] = rest.split(' ').map(v => Math.round(c.y(+v)));
    const x = Math.round(c.first + c.step * i - .5);
    const left = x - Math.floor(c.body / 2), h = Math.max(bot - top, 1);
    out.push(`<rect x="${left}" y="${c.base - 1}" width="${c.body}" height="1" fill="#4f6b87"/>`);
    if (type === 'm') { out.push(`<rect x="${left}" y="${top}" width="6" height="1" fill="#4f7f99"/>`); return; }
    const color = { u: '#e07070', d: '#78ccee', y: '#e6e600' }[type];
    if (hi < top) vline(x, hi, top, color);
    if (lo > bot) vline(x, bot, lo, color);
    if (type === 'u' && h > 1) out.push(`<rect x="${left + .5}" y="${top + .5}" width="${c.body - 1}" height="${h}" fill="#000" stroke="${color}"/>`);
    else out.push(`<rect class="crisp" x="${left}" y="${top}" width="${c.body}" height="${h}" fill="${color}"/>`);
  });
  c.lines.forEach(([color, pts]) => {
    const p = pts.split(' ').map(s => { const [x, y] = s.split(','); return `${c.x(+x).toFixed(1)},${c.y(+y).toFixed(1)}`; }).join(' ');
    out.push(`<polyline points="${p}" fill="none" stroke="${color}" stroke-linejoin="round"/>`);
  });
  hline(749, 1675, c.price[0], c.priceColor);
  const py = c.price[0];
  out.push(`<path d="M1675 ${py + .5}L1682 ${py - 9}H1740V${py + 10}H1682Z" fill="#e8dcc8"/><text class="tag" x="1684" y="${py + 6}">${c.price[1]}</text>`);
  out.push(`<text x="751" y="${c.volLabelY}">出来高</text>`);
  out.push(`<svg x="1676" y="${c.base - 5}" width="12" height="6"><text x="0" y="9">0</text></svg>`);
  document.getElementById(id).innerHTML = out.join('');
}
draw('plot-a', chartA);
draw('plot-b', chartB);
```
